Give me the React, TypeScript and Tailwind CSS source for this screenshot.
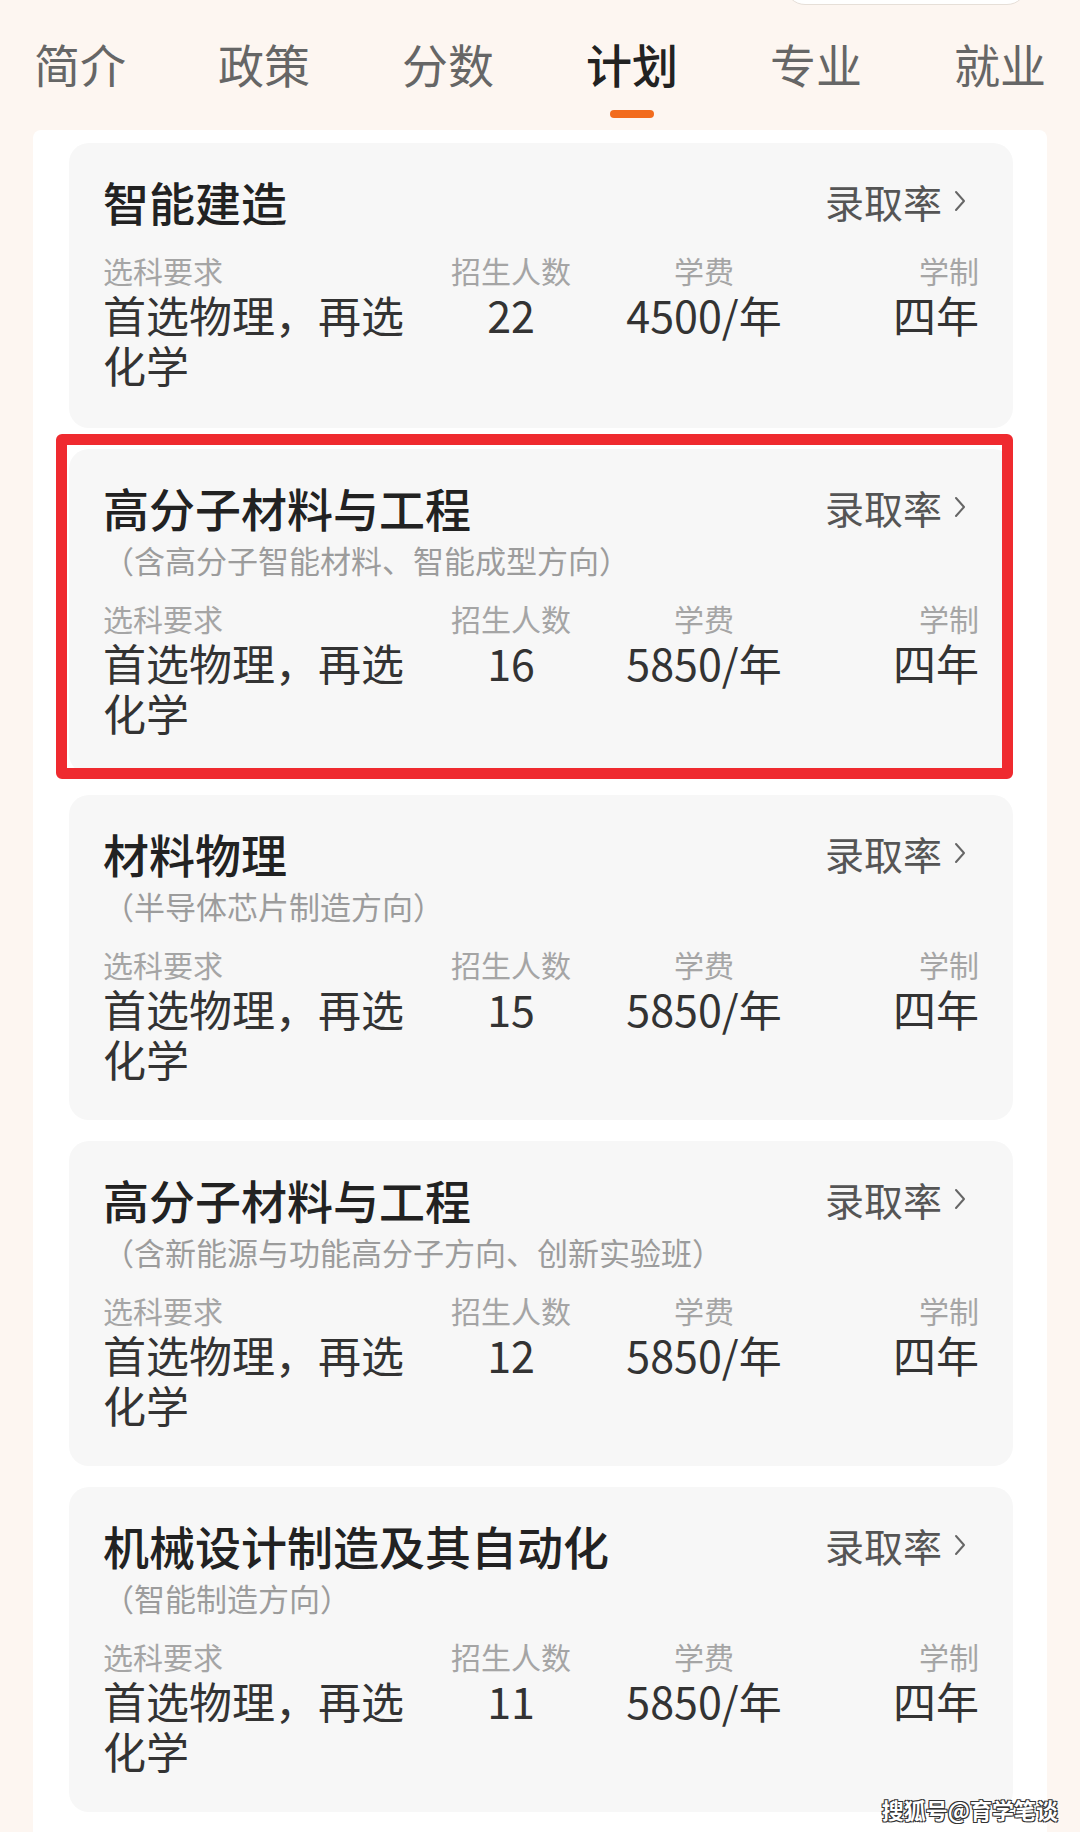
import React from "react";

type Item = {
  title: string;
  sub?: string;
  count: string;
  fee: string;
  mark?: boolean;
};

const items: Item[] = [
  { title: "智能建造", count: "22", fee: "4500/年" },
  { title: "高分子材料与工程", sub: "（含高分子智能材料、智能成型方向）", count: "16", fee: "5850/年", mark: true },
  { title: "材料物理", sub: "（半导体芯片制造方向）", count: "15", fee: "5850/年" },
  { title: "高分子材料与工程", sub: "（含新能源与功能高分子方向、创新实验班）", count: "12", fee: "5850/年" },
  { title: "机械设计制造及其自动化", sub: "（智能制造方向）", count: "11", fee: "5850/年" },
];

const tabs = ["简介", "政策", "分数", "计划", "专业", "就业"];

function Card({ item }: { item: Item }) {
  return (
    <div
      className={
        item.sub
          ? "relative rounded-[20px] bg-[#f7f7f7] px-[34px] pt-[35px] pb-[37px]"
          : "relative rounded-[20px] bg-[#f7f7f7] px-[34px] pt-[35px] pb-[39px]"
      }
    >
      {item.mark && (
        <div className="pointer-events-none absolute -top-[15px] -bottom-[5px] -left-[13px] right-0 rounded-[6px] border-[11px] border-[#ef2a2f]" />
      )}
      <div className="flex items-center justify-between">
        <div className="text-[46px] leading-[46px] font-medium text-[#222]">{item.title}</div>
        <div className="flex items-center text-[39px] leading-[46px] text-[#555]">
          <span>录取率</span>
          <svg className="ml-[11px] mr-[12px] h-[24px] w-[14px]" viewBox="0 0 14 24" fill="none">
            <path d="M3 3 L11 12 L3 21" stroke="#666" strokeWidth="2" strokeLinecap="round" strokeLinejoin="round" />
          </svg>
        </div>
      </div>
      {item.sub && (
        <div className="mt-[14px] text-[31px] leading-[31px] text-[#9c9c9c]">{item.sub}</div>
      )}
      <div className={item.sub ? "mt-[28px] flex" : "mt-[31px] flex"}>
        <div className="w-[310px]">
          <div className="text-[30px] leading-[30px] text-[#a5a5a5]">选科要求</div>
          <div className="mt-[4px] text-[43px] leading-[50px] text-[#333]">首选物理，再选化学</div>
        </div>
        <div className="w-[196px] text-center">
          <div className="text-[30px] leading-[30px] text-[#a5a5a5]">招生人数</div>
          <div className="mt-[4px] text-[43px] leading-[50px] text-[#333]">{item.count}</div>
        </div>
        <div className="w-[190px] text-center">
          <div className="text-[30px] leading-[30px] text-[#a5a5a5]">学费</div>
          <div className="mt-[4px] text-[43px] leading-[50px] text-[#333]">{item.fee}</div>
        </div>
        <div className="flex-1 text-right">
          <div className="text-[30px] leading-[30px] text-[#a5a5a5]">学制</div>
          <div className="mt-[4px] text-[43px] leading-[50px] text-[#333]">四年</div>
        </div>
      </div>
    </div>
  );
}

export default function App() {
  return (
    <div className="relative flex min-h-[1832px] w-[1080px] flex-col overflow-hidden bg-[#fdf6f1] font-['Noto_Sans_CJK_SC','Noto_Sans',sans-serif]">
      <div className="flex justify-end pr-[53px]">
        <div className="-mt-[35px] h-[40px] w-[242px] rounded-[20px] border border-[#e6dfd8] bg-white" />
      </div>
      <div className="flex justify-between px-[34px] pt-[35px]">
        {tabs.map((t) => {
          const active = t === "计划";
          return (
            <div key={t} className="flex flex-col items-center">
              <div
                className={
                  active
                    ? "text-[46px] leading-[46px] font-medium text-[#222]"
                    : "text-[46px] leading-[46px] text-[#666]"
                }
              >
                {t}
              </div>
              <div
                className={
                  active
                    ? "mt-[24px] h-[8px] w-[44px] rounded-full bg-[#f26b1d]"
                    : "mt-[24px] h-[8px] w-[44px]"
                }
              />
            </div>
          );
        })}
      </div>
      <div className="mx-[33px] mt-[12px] flex flex-1 flex-col gap-[21px] rounded-t-[8px] bg-white pt-[13px] pr-[34px] pb-[17px] pl-[36px]">
        {items.map((it, i) => (
          <Card key={i} item={it} />
        ))}
      </div>
      <div className="absolute right-[22px] bottom-[12px] text-[22px] leading-[22px] font-bold text-white [text-shadow:-1px_-1px_0_#333,1px_-1px_0_#333,-1px_1px_0_#333,1px_1px_0_#333]">
        搜狐号@育学笔谈
      </div>
    </div>
  );
}
